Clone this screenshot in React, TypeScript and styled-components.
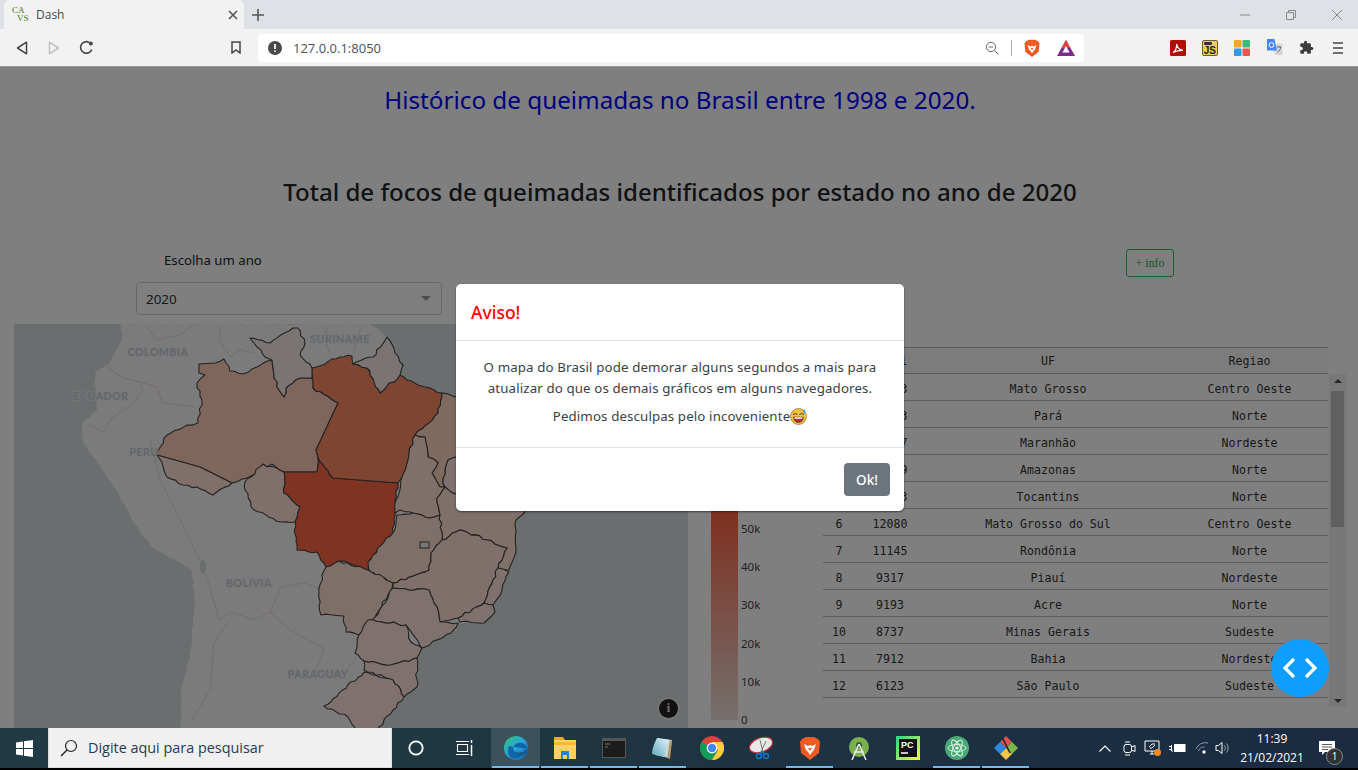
import React from "react";
import styled, { createGlobalStyle } from "styled-components";

const Global = createGlobalStyle`
  html, body { margin: 0; padding: 0; width: 1358px; height: 770px; overflow: hidden; background: #fff; }
  body { font-family: "Noto Sans", "Open Sans", Arial, sans-serif; color: #212529; }
  * { box-sizing: border-box; }
`;

const Screen = styled.div`
  width: 1358px; height: 770px; display: flex; flex-direction: column; overflow: hidden;
`;

/* ---------- browser chrome ---------- */
const Browser = styled.header`
  flex: 0 0 67px; background: #f2f2f2; border-bottom: 1px solid #9a9a9a; display: flex; flex-direction: column;
`;
const TabStrip = styled.div`
  height: 29px; background: #dee1e6; display: flex; align-items: stretch;
`;
const Tab = styled.div`
  width: 240px; margin-left: 4px; background: #f2f2f2; border-radius: 6px 6px 0 0;
  display: flex; align-items: center; padding: 0 6px 0 8px; position: relative;
`;
const Favicon = styled.span`
  width: 16px; height: 17px; display: grid; grid-template-rows: 8px 8px; font-family: "Liberation Serif", serif;
  font-size: 9px; line-height: 8px; color: #3f7a21; margin-right: 8px;
`;
const FavBottom = styled.span`
  padding-left: 5px;
`;
const TabTitle = styled.span`
  flex: 1; font-size: 12px; color: #45494d; font-family: "Open Sans", sans-serif;
`;
const NewTab = styled.div`
  width: 20px; margin-left: 4px; display: flex; align-items: center; justify-content: center;
`;
const WindowButtons = styled.div`
  margin-left: auto; margin-right: -2px; display: flex;
`;
const WinBtn = styled.div`
  width: 46px; display: flex; align-items: center; justify-content: center;
`;
const Toolbar = styled.div`
  flex: 1; display: flex; align-items: center; padding-left: 6px;
`;
const NavBtn = styled.div`
  width: 32px; height: 28px; display: flex; align-items: center; justify-content: center;
`;
const BookmarkSlot = styled(NavBtn)`
  margin-left: 118px;
`;
const Omnibox = styled.div`
  width: 826px; height: 28px; margin-left: 6px; background: #fff; border-radius: 4px;
  display: flex; align-items: center; padding: 0 0 0 10px;
`;
const Url = styled.span`
  margin-left: 11px; font-size: 13px; color: #4f4f55; font-family: "Open Sans", sans-serif; flex: 1;
`;
const OmniDivider = styled.span`
  width: 1px; height: 16px; background: #a9a9a9; margin: 0 11px 0 12px;
`;
const OmniIconRight = styled.span`
  display: flex; margin-right: 16px; &:last-child { margin-right: 9px; }
`;
const Extensions = styled.div`
  display: flex; margin-left: 78px;
`;
const JsBadge = styled.span`
  width: 16px; height: 16px; background: #e8cf4d; border: 1px solid #6a6020; border-radius: 2px;
  font: bold 10px/19px "Liberation Sans", sans-serif; color: #222; text-align: right; padding-right: 1px;
  position: relative; display: block;
  &::before { content: ""; position: absolute; left: 1px; top: 1px; width: 8px; height: 3px; background: #333; border-radius: 1px; }
`;

/* ---------- page ---------- */
const Main = styled.main`
  flex: 1; position: relative; overflow: hidden; background: #fff; display: flex; flex-direction: column;
`;
const Backdrop = styled.div`
  position: absolute; inset: 0; background: rgba(0, 0, 0, 0.5); z-index: 10;
`;
const PageTitle = styled.h1`
  margin: 18px 0 0; font-size: 24.25px; line-height: 29px; font-weight: 400; color: #0000ff; text-align: center; padding-left: 2px;
`;
const SectionTitle = styled.h2`
  margin: 63px 0 0; font-size: 24.05px; line-height: 29px; font-weight: 500; color: #212529; text-align: center; padding-left: 2px;
`;
const Content = styled.section`
  margin-top: 43px; display: flex; flex: 1; min-height: 0;
`;
const LeftColumn = styled.div`
  width: 809px; margin-left: 14px; display: flex; flex-direction: column;
`;
const YearLabel = styled.label`
  margin: 1px 0 0 150px; font-size: 13.2px; line-height: 20px; color: #212529;
`;
const YearSelect = styled.div`
  margin: 12px 0 0 122px; width: 306px; height: 33px; border: 1px solid #ccc; border-radius: 4px; background: #fff;
  display: flex; align-items: center; justify-content: space-between; padding: 0 9px; font-size: 13.4px; color: #333;
`;
const Caret = styled.span`
  width: 0; height: 0; border: 5px solid transparent; border-top-color: #999; border-bottom: 0; margin-right: 1px;
`;
const Figure = styled.div`
  margin-top: 9px; flex: 1; display: flex; min-height: 0; position: relative;
`;
const MapSvg = styled.svg`
  width: 674px; height: 404px; flex: none; display: block;
`;
const MapInfo = styled.span`
  position: absolute; left: 645px; top: 375px; width: 19px; height: 19px; border-radius: 50%;
  background: #222; box-shadow: 0 0 0 2px rgba(255,255,255,.35); color: #eee; font: bold 12px/19px "Liberation Serif", serif; text-align: center;
`;
const Legend = styled.div`
  margin-left: 23px; display: flex; align-items: flex-start; height: 402px;
`;
const ColorBar = styled.div`
  width: 27px; height: 390px; margin-top: 6px;
  background: linear-gradient(0deg, #eadfda 0%, #fe6040 54%, #fe6040 100%);
`;
const LegendScale = styled.div`
  margin-left: 3px; height: 402px; display: flex; flex-direction: column; justify-content: flex-end;
`;
const Tick = styled.span`
  height: 38.2px; font-size: 11.5px; line-height: 12px; color: #444;
  &:last-child { height: 12px; }
`;
const RightColumn = styled.div`
  width: 523px; display: flex; flex-direction: column;
`;
const InfoButton = styled.button`
  margin-left: 303px; width: 48px; height: 28px; border: 1px solid #34c060; border-radius: 3px; background: transparent;
  color: #28a745; font: 12px/1 "Liberation Serif", serif; padding: 0;
`;
const TableShell = styled.div`
  margin-top: 70px; font: 11.6px/30px "DejaVu Sans Mono", "Liberation Mono", monospace; color: #333;
`;
const Row = styled.div`
  width: 505px; height: 27px; display: grid; grid-template-columns: 32px 70px 246px 157px; text-align: center;
  border-bottom: 1px solid #bbb;
`;
const HeadRow = styled(Row)`
  border-top: 1px solid #bbb; background: #f8f8f8; line-height: 26px;
`;
const BodyWrap = styled.div`
  display: flex; height: 333px;
`;
const RowList = styled.div`
  width: 506px;
`;
const Scrollbar = styled.div`
  width: 17px; background: #f1f1f1; display: flex; flex-direction: column; align-items: center; justify-content: space-between;
`;
const ScrollThumb = styled.div`
  width: 13px; height: 136px; background: #c1c1c1; margin-top: 17px; margin-bottom: auto;
`;
const ScrollArrow = styled.span<{ $up?: boolean }>`
  width: 0; height: 0; border: 4px solid transparent; margin: 5px 0 4px;
  ${(p) => (p.$up ? "border-bottom: 4px solid #505050; border-top: 0; position:absolute; margin-top:5px;" : "border-top: 4px solid #505050; border-bottom: 0;")}
`;

/* ---------- modal ---------- */
const Modal = styled.div`
  position: absolute; z-index: 20; left: 456px; top: 217px; width: 448px; height: 227px; background: #fff; border-radius: 5px;
  box-shadow: 0 1px 2px rgba(0,0,0,.5); display: flex; flex-direction: column;
`;
const ModalHeader = styled.div`
  height: 57px; padding: 0 15px; border-bottom: 1px solid #dee2e6; display: flex; align-items: center;
  font-size: 17.5px; font-weight: 500; color: #ff0000;
`;
const ModalBody = styled.div`
  height: 107px; padding-top: 16px; border-bottom: 1px solid #dee2e6; text-align: center; font-size: 13.3px; line-height: 21px; color: #3a3f44;
`;
const ModalLine = styled.p`
  margin: 0; white-space: nowrap; letter-spacing: .12px;
`;
const ModalNote = styled(ModalLine)`
  margin-top: 7px; display: flex; justify-content: center; align-items: center;
`;
const ModalFooter = styled.div`
  flex: 1; display: flex; justify-content: flex-end; padding: 15px 14px 0 0;
`;
const OkButton = styled.button`
  width: 46px; height: 33px; background: #6c757d; color: #fff; border: 0; border-radius: 4px; font: 500 13.5px "Noto Sans", sans-serif; padding: 0;
`;
const Fab = styled.div`
  position: absolute; z-index: 30; left: 1271px; top: 572px; width: 58px; height: 58px; border-radius: 50%; background: #0f9eff;
  display: flex; align-items: center; justify-content: center;
`;

/* ---------- taskbar ---------- */
const Taskbar = styled.footer`
  flex: 0 0 42px; background: linear-gradient(90deg, #203b46 0%, #1f3542 45%, #1a2b42 100%); border-bottom: 2px solid #000; display: flex; align-items: stretch;
`;
const StartBtn = styled.div`
  width: 48px; display: flex; align-items: center; justify-content: center;
`;
const SearchBox = styled.div`
  width: 344px; background: #f0f0f0; display: flex; align-items: center; padding-left: 11px; border: 1px solid #ddd; border-top: 0;
`;
const SearchText = styled.span`
  margin-left: 10px; font-size: 14.4px; color: #2a3a4c; font-family: "Open Sans", sans-serif;
`;
const TaskSlot = styled.div`
  width: 48px; display: flex; align-items: center; justify-content: center;
`;
const AppSlot = styled.div<{ $active?: boolean; $open?: boolean }>`
  width: 49px; padding-bottom: 1px; display: flex; align-items: center; justify-content: center; position: relative;
  background: ${(p) => (p.$active ? "#3b525c" : "transparent")};
  &::after { content: ""; position: absolute; left: 1px; right: 1px; bottom: 0; height: 2px; background: ${(p) => (p.$open ? "#76b9ed" : "transparent")}; }
`;
const Apps = styled.div`
  display: flex; margin-left: 3px;
`;
const Tray = styled.div`
  margin-left: auto; display: flex; align-items: center;
`;
const TrayIcon = styled.span<{ $w: number }>`
  width: ${(p) => p.$w}px; display: flex; justify-content: center;
`;
const Clock = styled.div`
  width: 68px; margin-left: 8px; text-align: center; color: #fff; font: 12px/19px "Open Sans", sans-serif;
`;
const Notif = styled.div`
  width: 36px; margin: 0 13px 0 3px; position: relative; display: flex; justify-content: center;
`;
const NotifBadge = styled.span`
  position: absolute; left: 17px; top: 7px; width: 17px; height: 17px; border-radius: 50%; background: #333; border: 1px solid #888;
  color: #fff; font: 10px/15px "Open Sans", sans-serif; text-align: center;
`;

/* ---------- data ---------- */
const rows = [
  ["1", "47713", "Mato Grosso", "Centro Oeste"],
  ["2", "38603", "Pará", "Norte"],
  ["3", "16737", "Maranhão", "Nordeste"],
  ["4", "16029", "Amazonas", "Norte"],
  ["5", "13883", "Tocantins", "Norte"],
  ["6", "12080", "Mato Grosso do Sul", "Centro Oeste"],
  ["7", "11145", "Rondônia", "Norte"],
  ["8", "9317", "Piauí", "Nordeste"],
  ["9", "9193", "Acre", "Norte"],
  ["10", "8737", "Minas Gerais", "Sudeste"],
  ["11", "7912", "Bahia", "Nordeste"],
  ["12", "6123", "São Paulo", "Sudeste"],
];

const lightA = "#ffe4dc", lightB = "#f4e8e4";
const states: [string, string][] = [
  ["199,364 215,363 224,359 230,371 243,374 257,367 272,360 277,387 284,397 286,388 300,378 312,378 313,388 338,403 316,450 318,457 317,472 284,472 272,464 247,478 232,483 200,467 157,455 167,435 187,425 198,423 202,400 197,383 205,375 199,373", "#ffcdb8"],
  ["157,455 200,467 232,483 213,495 197,487 183,485 167,477 163,467", "#ffe0d8"],
  ["245,482 263,464 284,472 284,493 300,507 295,522 281,522 254,510 245,490", "#ffe0d6"],
  ["284,472 317,472 318,457 333,478 398,483 395,510 393,533 384,542 370,560 368,570 353,565 339,561 326,567 317,552 297,550 295,522 300,507 284,493", "#fe6644"],
  ["312,368 340,357 352,356 353,364 367,368 380,393 400,375 418,385 425,387 442,393 438,413 415,435 409,453 402,477 398,483 333,478 318,457 316,450 338,403 313,388", "#ff8a66"],
  ["250,338 270,343 293,328 298,328 305,343 300,355 312,368 312,378 300,378 286,388 284,397 277,387 272,360 265,357 257,347", lightB],
  ["387,337 395,353 403,365 400,375 380,393 367,368 353,364 373,357", lightB],
  ["442,393 500,405 500,470 456,457 448,460 443,483 445,487 440,487 432,473 438,463 428,457 425,437 415,435 438,413", "#ffd4c0"],
  ["415,435 425,437 428,457 438,463 432,473 440,487 445,487 437,498 440,515 430,518 413,513 400,510 395,513 396,500 402,477 409,453", "#ffe0d4"],
  ["445,487 443,483 448,460 456,457 500,470 500,500 456,494", lightA],
  ["525,512 516,520 516,548 509,570 498,568 507,548 487,540 460,530 442,540 440,515 437,498 445,487 456,494 530,470", "#ffe0d4"],
  ["397,515 413,513 430,518 440,515 442,540 431,553 429,570 393,583 370,572 368,562 384,542 393,533", "#fce0d2"],
  ["442,540 460,530 487,540 507,548 498,568 493,580 484,603 458,618 440,622 437,607 429,590 393,588 393,583 429,570 431,553", "#ffe0d6"],
  ["498,568 509,572 502,590 493,605 484,603 493,580", lightA],
  ["493,605 495,612 484,623 460,622 458,618 484,603", lightA],
  ["393,588 429,590 437,607 440,622 458,623 451,633 422,648 406,625 368,620 375,617", "#ffe4dc"],
  ["326,567 339,561 368,570 393,583 392,588 375,617 359,635 346,632 344,616 321,615 319,588", "#ffdfd2"],
  ["368,620 406,625 411,642 422,648 417,658 391,665 364,661 355,653 359,635", "#ffe4dc"],
  ["364,661 391,665 417,658 417,687 404,697 393,680 364,670", lightA],
  ["364,672 393,680 404,697 379,727 372,760 348,717 324,706", "#ffe4dc"],
];

const straight = new Set([
  "157,455|200,467", "200,467|232,483", "316,450|338,403", "284,472|317,472", "333,478|398,483", "300,378|312,378",
  "199,364|215,363", "316,450|318,457", "312,368|312,378",
]);
const noise = (x: number, y: number) => {
  const v = Math.sin(x * 12.9898 + y * 78.233) * 43758.5453;
  return (v - Math.floor(v)) * 2 - 1;
};
/* Roughens a polygon's edges; a shared edge gets the same points from both states. */
const roughen = (points: string, amp = 1.3) => {
  const pts = points.split(" ").map((p) => p.split(",").map(Number));
  const out: string[] = [];
  pts.forEach((a, i) => {
    const b = pts[(i + 1) % pts.length];
    const swap = a[0] > b[0] || (a[0] === b[0] && a[1] > b[1]);
    const [p, q] = swap ? [b, a] : [a, b];
    const key = `${p[0]},${p[1]}|${q[0]},${q[1]}`;
    out.push(`${a[0]},${a[1]}`);
    if (straight.has(key)) return;
    const len = Math.hypot(q[0] - p[0], q[1] - p[1]);
    const n = Math.floor(len / 4);
    const mid: string[] = [];
    for (let k = 1; k < n; k++) {
      const t = k / n;
      const x = p[0] + (q[0] - p[0]) * t;
      const y = p[1] + (q[1] - p[1]) * t;
      const d = noise(x, y) * amp;
      mid.push(`${(x - ((q[1] - p[1]) / len) * d).toFixed(1)},${(y + ((q[0] - p[0]) / len) * d).toFixed(1)}`);
    }
    if (swap) mid.reverse();
    out.push(...mid);
  });
  return out.join(" ");
};

const borders = [
  "107,367 123,378 140,382 143,390 133,403 112,418 103,432 90,425",
  "140,382 157,387 163,403 195,407",
  "147,327 157,340 180,335 193,325",
  "220,327 220,340 230,357 240,350 253,353",
  "327,327 325,340 330,355",
  "360,330 353,353",
  "201,563 210,587 219,620 232,612 254,620 270,612 281,587 304,583 319,588",
  "270,612 290,630 324,648 315,672 344,673 357,657",
  "228,622 214,643 210,690 192,720",
  "150,440 160,480 190,540 201,563",
];

const labels: [string, number, number][] = [
  ["COLOMBIA", 158, 356], ["SURINAME", 340, 343], ["ECUADOR", 101, 400], ["PERU", 144, 456], ["BOLIVIA", 249, 587], ["PARAGUAY", 318, 678],
];

/* ---------- icons ---------- */
const G = ({ s = 16, children }: { s?: number; children: React.ReactNode }) => (
  <svg width={s} height={s} viewBox="0 0 24 24" fill="none">{children}</svg>
);
const BraveIcon = ({ s = 18 }: { s?: number }) => (
  <G s={s}>
    <path d="M4 3 8 1h8l4 2 2 3-1 11-9 7-9-7L2 6z" fill="#f15a22" />
    <path d="M6 8l4 2 2-1 2 1 4-2-2 6-2 2-2 3-2-3-2-2z" fill="#fff" />
    <path d="M10 12h4l-2 3z" fill="#f15a22" />
  </G>
);
const MapFigure = () => (
  <MapSvg viewBox="14 324 674 404" aria-label="Mapa do Brasil">
    <rect x="14" y="324" width="674" height="404" fill="#d4dcdf" />
    <polygon fill="#f6f6f6" points={roughen("120,324 122,340 110,363 95,372 97,410 82,423 83,443 100,467 116,490 134,523 152,547 192,570 195,603 190,657 181,690 181,730 375,730 379,727 404,697 417,687 417,658 422,648 451,633 458,623 484,623 495,612 493,605 502,590 509,572 516,548 516,520 525,512 580,470 580,410 456,398 442,393 425,388 418,386 400,376 403,365 395,353 387,337 370,324", 0.9)} />
    {borders.map((b) => (
      <polyline key={b} points={b} fill="none" stroke="#f0d8d2" strokeWidth="1" />
    ))}
    <ellipse cx="203" cy="567" rx="3" ry="7" fill="#d4dcdf" />
    {states.map(([p, c]) => (
      <polygon key={p} points={roughen(p)} fill={c} stroke="#444" strokeWidth="1.1" strokeLinejoin="round" />
    ))}
    <rect x="420" y="542" width="9" height="6" fill="#f5eeea" stroke="#444" strokeWidth="1" />
    {labels.map(([t, x, y]) => (
      <text key={t} x={x} y={y} textAnchor="middle" fontFamily="Lato, 'Noto Sans', sans-serif" fontWeight="700" fontSize="10.5" letterSpacing=".6" fill="#c4ceda" stroke="#f0f0f0" strokeWidth="1.4" paintOrder="stroke">{t}</text>
    ))}
  </MapSvg>
);

export default function App() {
  return (
    <Screen>
      <Global />
      <Browser>
        <TabStrip>
          <Tab>
            <Favicon>CA<FavBottom>VS</FavBottom></Favicon>
            <TabTitle>Dash</TabTitle>
            <svg width="10" height="10" viewBox="0 0 10 10"><path d="M1 1l8 8M9 1l-8 8" stroke="#555" strokeWidth="1.6" /></svg>
          </Tab>
          <NewTab>
            <svg width="12" height="12" viewBox="0 0 12 12"><path d="M6 0v12M0 6h12" stroke="#555" strokeWidth="1.6" /></svg>
          </NewTab>
          <WindowButtons>
            <WinBtn><svg width="10" height="10" viewBox="0 0 10 10"><path d="M0 5h10" stroke="#8a8a8a" /></svg></WinBtn>
            <WinBtn><svg width="10" height="10" viewBox="0 0 10 10"><path d="M.5 2.5h7v7h-7zM2.5 2.5v-2h7v7h-2" stroke="#8a8a8a" fill="none" /></svg></WinBtn>
            <WinBtn><svg width="10" height="10" viewBox="0 0 10 10"><path d="M0 0l10 10M10 0L0 10" stroke="#8a8a8a" /></svg></WinBtn>
          </WindowButtons>
        </TabStrip>
        <Toolbar>
          <NavBtn><svg width="12" height="14" viewBox="0 0 12 14"><path d="M10.5 1.2v11.6L1.5 7z" stroke="#444" strokeWidth="1.5" fill="none" strokeLinejoin="round" /></svg></NavBtn>
          <NavBtn><svg width="12" height="14" viewBox="0 0 12 14"><path d="M1.5 1.2v11.6L10.5 7z" stroke="#c2c2c2" strokeWidth="1.5" fill="none" strokeLinejoin="round" /></svg></NavBtn>
          <NavBtn>
            <svg width="15" height="15" viewBox="0 0 15 15"><path d="M12.8 9.5A5.8 5.8 0 1 1 10 2.3" stroke="#444" strokeWidth="1.6" fill="none" /><circle cx="11.8" cy="3.6" r="2" fill="#444" /></svg>
          </NavBtn>
          <BookmarkSlot><svg width="10" height="13" viewBox="0 0 10 13"><path d="M1 1h8v11L5 9l-4 3z" stroke="#444" strokeWidth="1.5" fill="none" /></svg></BookmarkSlot>
          <Omnibox>
            <svg width="14" height="14" viewBox="0 0 14 14"><circle cx="7" cy="7" r="7" fill="#4a4a4a" /><path d="M7 3v5M7 9.5v1.6" stroke="#fff" strokeWidth="1.7" /></svg>
            <Url>127.0.0.1:8050</Url>
            <svg width="14" height="14" viewBox="0 0 14 14"><circle cx="6" cy="6" r="4.7" stroke="#666" fill="none" /><path d="M3.7 6h4.6M9.5 9.5l4 4" stroke="#666" /></svg>
            <OmniDivider />
            <OmniIconRight><BraveIcon s={18} /></OmniIconRight>
            <OmniIconRight>
              <svg width="18" height="16" viewBox="0 0 18 16"><path d="M9 0l9 16H0z" fill="#7d2a8e" /><path d="M9 0l4.5 8h-9z" fill="#e0403a" /><path d="M9 6l3.5 6.5h-7z" fill="#fff" /></svg>
            </OmniIconRight>
          </Omnibox>
          <Extensions>
            <NavBtn>
              <svg width="16" height="16" viewBox="0 0 16 16"><rect width="16" height="16" rx="1.5" fill="#b30b00" /><path d="M3 12.5c2-1 3.6-4 3.7-8.5.3 3 2 5.6 6.3 6.3-3-.1-6.5.5-10 2.2z" stroke="#fff" strokeWidth="1.2" fill="none" /></svg>
            </NavBtn>
            <NavBtn><JsBadge>JS</JsBadge></NavBtn>
            <NavBtn>
              <svg width="16" height="16" viewBox="0 0 16 16"><rect width="7.5" height="7.5" rx="1" fill="#f6a623" /><rect x="8.5" width="7.5" height="7.5" rx="1" fill="#3cba78" /><rect y="8.5" width="7.5" height="7.5" rx="1" fill="#2f9be8" /><rect x="8.5" y="8.5" width="7.5" height="7.5" rx="1" fill="#ef5350" /></svg>
            </NavBtn>
            <NavBtn>
              <svg width="17" height="17" viewBox="0 0 17 17"><path d="M7 5h9.5v11H9z" fill="#d6d6d6" /><path d="M1 0h7.5l2.5 11.5H1z" fill="#4285f4" /><circle cx="5.5" cy="6" r="2.4" stroke="#fff" fill="none" /><path d="M11 8h4M13 7v1M11.5 13c2-1 3-3 3.3-5" stroke="#666" fill="none" /></svg>
            </NavBtn>
            <NavBtn>
              <svg width="15" height="15" viewBox="0 0 24 24"><path d="M20.5 11H19V7a2 2 0 0 0-2-2h-4V3.5a2.5 2.5 0 0 0-5 0V5H4a2 2 0 0 0-2 2v3.8h1.5a2.7 2.7 0 0 1 0 5.4H2V20a2 2 0 0 0 2 2h3.8v-1.5a2.7 2.7 0 0 1 5.4 0V22H17a2 2 0 0 0 2-2v-4h1.5a2.5 2.5 0 0 0 0-5z" fill="#3c3c3c" /></svg>
            </NavBtn>
            <NavBtn>
              <svg width="10" height="12" viewBox="0 0 10 12"><path d="M0 1h10M0 6h10M0 11h10" stroke="#444" strokeWidth="1.6" /></svg>
            </NavBtn>
          </Extensions>
        </Toolbar>
      </Browser>

      <Main>
        <PageTitle>Histórico de queimadas no Brasil entre 1998 e 2020.</PageTitle>
        <SectionTitle>Total de focos de queimadas identificados por estado no ano de 2020</SectionTitle>
        <Content>
          <LeftColumn>
            <YearLabel>Escolha um ano</YearLabel>
            <YearSelect>2020<Caret /></YearSelect>
            <Figure>
              <MapFigure />
              <MapInfo>i</MapInfo>
              <Legend>
                <ColorBar />
                <LegendScale>
                  {["50k", "40k", "30k", "20k", "10k", "0"].map((t) => <Tick key={t}>{t}</Tick>)}
                </LegendScale>
              </Legend>
            </Figure>
          </LeftColumn>
          <RightColumn>
            <InfoButton>+ info</InfoButton>
            <TableShell>
              <HeadRow><span></span><span>Total</span><span>UF</span><span>Regiao</span></HeadRow>
              <BodyWrap>
                <RowList>
                  {rows.map((r) => (
                    <Row key={r[0]}>{r.map((c, i) => <span key={i}>{c}</span>)}</Row>
                  ))}
                </RowList>
                <Scrollbar>
                  <ScrollArrow $up />
                  <ScrollThumb />
                  <ScrollArrow />
                </Scrollbar>
              </BodyWrap>
            </TableShell>
          </RightColumn>
        </Content>
        <Backdrop />
        <Modal>
          <ModalHeader>Aviso!</ModalHeader>
          <ModalBody>
            <ModalLine>O mapa do Brasil pode demorar alguns segundos a mais para</ModalLine>
            <ModalLine>atualizar do que os demais gráficos em alguns navegadores.</ModalLine>
            <ModalNote>
              Pedimos desculpas pelo incoveniente
              <svg width="17" height="17" viewBox="0 0 17 17">
                <circle cx="8.5" cy="8.5" r="8" fill="#f7c23c" stroke="#7a5a10" strokeWidth=".6" />
                <path d="M3 6.5l2.5-1 2 1M9.5 6.5l2-1 2.5 1" stroke="#333" fill="none" />
                <path d="M3.5 9h10c0 3.5-2.2 5.5-5 5.5S3.5 12.5 3.5 9z" fill="#b52a2a" stroke="#333" strokeWidth=".5" />
                <path d="M4.5 9.3h8v1.500h-8z" fill="#fff" />
                <path d="M14 1c1.5 1.800 2 2.700 1.300 3.700-.7.800-2.200.5-2.300-.7 0-.8.5-1.600 1-3z" fill="#4aa3e8" />
              </svg>
            </ModalNote>
          </ModalBody>
          <ModalFooter><OkButton>Ok!</OkButton></ModalFooter>
        </Modal>
        <Fab>
          <svg width="36" height="24" viewBox="0 0 36 24"><path d="M12 3L3 12l9 9M24 3l9 9-9 9" stroke="#fff" strokeWidth="3.2" fill="none" /></svg>
        </Fab>
      </Main>

      <Taskbar>
        <StartBtn>
          <svg width="17" height="17" viewBox="0 0 17 17"><path d="M0 2.4L7 1.400V8H0zM8 1.300L17 0v8H8zM0 9h7v6.600l-7-1zM8 9h9v8l-9-1.300z" fill="#fff" /></svg>
        </StartBtn>
        <SearchBox>
          <svg width="18" height="18" viewBox="0 0 18 18"><circle cx="11" cy="7" r="5.5" stroke="#222" strokeWidth="1.2" fill="none" /><path d="M7 11l-6 6" stroke="#222" strokeWidth="1.4" /></svg>
          <SearchText>Digite aqui para pesquisar</SearchText>
        </SearchBox>
        <TaskSlot>
          <svg width="16" height="16" viewBox="0 0 16 16"><circle cx="8" cy="8" r="6.7" stroke="#fff" strokeWidth="1.8" fill="none" /></svg>
        </TaskSlot>
        <TaskSlot>
          <svg width="18" height="16" viewBox="0 0 18 16"><path d="M2.5 4.500h10v7h-10zM1 1.500h13M1 14.500h13" stroke="#fff" fill="none" strokeWidth="1.1" /><path d="M16.5 0v3M16.5 5v11" stroke="#fff" strokeWidth="1.5" /></svg>
        </TaskSlot>
        <Apps>
          <AppSlot $active $open>
            <svg width="24" height="24" viewBox="0 0 24 24">
              <defs><linearGradient id="edge" x1="0" y1="0" x2="1" y2="1"><stop offset="0" stopColor="#36c66d" /><stop offset=".5" stopColor="#27a4e0" /><stop offset="1" stopColor="#0f5ea8" /></linearGradient></defs>
              <circle cx="12" cy="12" r="12" fill="url(#edge)" />
              <path d="M24 13c-1-5-6-7-10-6-4 1-6 5-4 8 2 3 7 3 9 1-1 5-6 8-11 6C4 21 3 14 5 10" fill="#1067a8" />
              <path d="M11 15c2 2 6 2 9 0 2-2 4-2 4-2l-1 4c-2 3-8 4-11 1z" fill="#155c94" />
            </svg>
          </AppSlot>
          <AppSlot $open>
            <svg width="24" height="22" viewBox="0 0 24 22"><path d="M1 0h9l2 3H1z" fill="#e8a91c" /><path d="M1 3h22v19H1z" fill="#ffd25f" /><path d="M1 5h22v3H1z" fill="#f6bb35" /><path d="M8 14h8v8h-2v-4h-4v4H8z" fill="#1c84d8" /></svg>
          </AppSlot>
          <AppSlot $open>
            <svg width="24" height="20" viewBox="0 0 24 20"><rect width="24" height="20" fill="#555" /><rect x="1" y="3" width="22" height="16" fill="#1c1c1c" /><path d="M3 6h5M3 9h3" stroke="#777" /></svg>
          </AppSlot>
          <AppSlot $open>
            <svg width="24" height="24" viewBox="0 0 24 24"><path d="M6 2l15 2-3 18-14-3z" fill="#c9d6dc" /><path d="M19 4l2 1-2 18-3-1z" fill="#b29a66" /><path d="M6 2C3 8 1 13 1 18l13 3c0-6 2-12 4-17z" fill="url(#note)" /><defs><linearGradient id="note" x1="0" y1="1" x2="1" y2="0"><stop offset="0" stopColor="#5aa9bd" /><stop offset="1" stopColor="#e6f4f7" /></linearGradient></defs></svg>
          </AppSlot>
          <AppSlot>
            <svg width="24" height="24" viewBox="0 0 24 24"><circle cx="12" cy="12" r="12" fill="#db4437" /><path d="M12 12L1.6 6A12 12 0 0 0 12 24l6-10z" fill="#0f9d58" /><path d="M12 6h10.4A12 12 0 0 1 12 24l6-10z" fill="#ffcd40" /><circle cx="12" cy="12" r="5.4" fill="#fff" /><circle cx="12" cy="12" r="4.2" fill="#4285f4" /></svg>
          </AppSlot>
          <AppSlot>
            <svg width="24" height="24" viewBox="0 0 24 24"><ellipse cx="12" cy="9" rx="12" ry="7" transform="rotate(-20 12 9)" fill="#e9e9e9" stroke="#c0303a" strokeWidth="1.2" /><path d="M11 4l3 12M17 5l-5 11" stroke="#777" /><circle cx="10" cy="20" r="2.5" fill="none" stroke="#1477c4" strokeWidth="1.5" /><circle cx="17" cy="20" r="2.5" fill="none" stroke="#1477c4" strokeWidth="1.5" /><path d="M12 16l-1 3M13 15l3 4" stroke="#1477c4" strokeWidth="1.5" /></svg>
          </AppSlot>
          <AppSlot $open><BraveIcon s={24} /></AppSlot>
          <AppSlot>
            <svg width="24" height="24" viewBox="0 0 24 24"><circle cx="12" cy="11" r="10" fill="#7bb04a" /><circle cx="12" cy="9" r="3" fill="#2f5c38" /><path d="M12 8L5 24M12 8l7 16M7 16h10" stroke="#e8e8e8" strokeWidth="1.5" /></svg>
          </AppSlot>
          <AppSlot>
            <svg width="24" height="24" viewBox="0 0 24 24"><defs><linearGradient id="pc" x1="0" y1="0" x2="1" y2="1"><stop offset="0" stopColor="#21d789" /><stop offset="1" stopColor="#fcf84a" /></linearGradient></defs><rect width="24" height="24" fill="url(#pc)" /><rect x="3" y="3" width="18" height="18" fill="#111" /><text x="5" y="12" fontFamily="Liberation Sans, sans-serif" fontSize="9" fontWeight="700" fill="#fff">PC</text><path d="M5 17h7" stroke="#fff" strokeWidth="1.5" /></svg>
          </AppSlot>
          <AppSlot $open>
            <svg width="24" height="24" viewBox="0 0 24 24"><circle cx="12" cy="12" r="12" fill="#4aa776" /><g fill="none" stroke="#d7f0e0" strokeWidth="1"><ellipse cx="12" cy="12" rx="9" ry="3.5" /><ellipse cx="12" cy="12" rx="9" ry="3.5" transform="rotate(60 12 12)" /><ellipse cx="12" cy="12" rx="9" ry="3.5" transform="rotate(120 12 12)" /></g><circle cx="12" cy="12" r="1.6" fill="#fff" /></svg>
          </AppSlot>
          <AppSlot $open>
            <svg width="24" height="24" viewBox="0 0 24 24"><path d="M12 0l6 6-6 6-6-6z" fill="#d9534f" /><path d="M12 12l6-6 6 6-6 6z" fill="#7ab648" /><path d="M12 12l6 6-6 6-6-6z" fill="#f0c94a" /><path d="M6 6l6 6-6 6-6-6z" fill="#2e86de" /><path d="M8 1l8 16" stroke="#222" strokeWidth="1.5" /></svg>
          </AppSlot>
        </Apps>
        <Tray>
          <TrayIcon $w={24}><svg width="12" height="7" viewBox="0 0 12 7"><path d="M.5 6.5L6 1l5.5 5.5" stroke="#fff" fill="none" strokeWidth="1.1" /></svg></TrayIcon>
          <TrayIcon $w={24}><svg width="13" height="15" viewBox="0 0 13 15"><rect x="1" y="3.5" width="7.5" height="8" rx="2" stroke="#fff" fill="none" /><path d="M8.5 6l3.5-1.5v6L8.5 9M2 1h5M2 14h5" stroke="#fff" fill="none" /></svg></TrayIcon>
          <TrayIcon $w={24}><svg width="18" height="17" viewBox="0 0 18 17"><path d="M1 1h14v10H1zM6 14h4M8 11v3" stroke="#fff" fill="none" /><path d="M5 7l3-3h3M11 5l-3 3H6" stroke="#fff" fill="none" /><circle cx="13.5" cy="12.5" r="3.5" fill="#f58a1f" /></svg></TrayIcon>
          <TrayIcon $w={25}><svg width="17" height="10" viewBox="0 0 17 10"><path d="M0 3.5h2.5M0 6.5h2.5M2.5 2v6h1.5" stroke="#fff" fill="none" /><rect x="5" y="1" width="11.5" height="8" fill="#fff" /></svg></TrayIcon>
          <TrayIcon $w={25}><svg width="15" height="14" viewBox="0 0 15 14"><path d="M1 8a10 10 0 0 1 12-6M3.5 10a6 6 0 0 1 6-4" stroke="#8a97a3" fill="none" /><circle cx="9" cy="11" r="1.7" fill="#fff" /></svg></TrayIcon>
          <TrayIcon $w={15}><svg width="15" height="14" viewBox="0 0 15 14"><path d="M1 4.5h2.5L7 1.5v11L3.5 9.5H1z" stroke="#fff" fill="none" /><path d="M9.5 4.5a4 4 0 0 1 0 5M11.5 2.5a7 7 0 0 1 0 9" stroke="#9aa" fill="none" /></svg></TrayIcon>
          <Clock>11:39<br />21/02/2021</Clock>
          <Notif>
            <svg width="17" height="15" viewBox="0 0 17 15"><path d="M0 0h16v11H6l-3 3v-3H0z" fill="#fff" /><path d="M3 3.5h10M3 6h10M3 8.5h6" stroke="#333" strokeWidth=".8" /></svg>
            <NotifBadge>1</NotifBadge>
          </Notif>
        </Tray>
      </Taskbar>
    </Screen>
  );
}
